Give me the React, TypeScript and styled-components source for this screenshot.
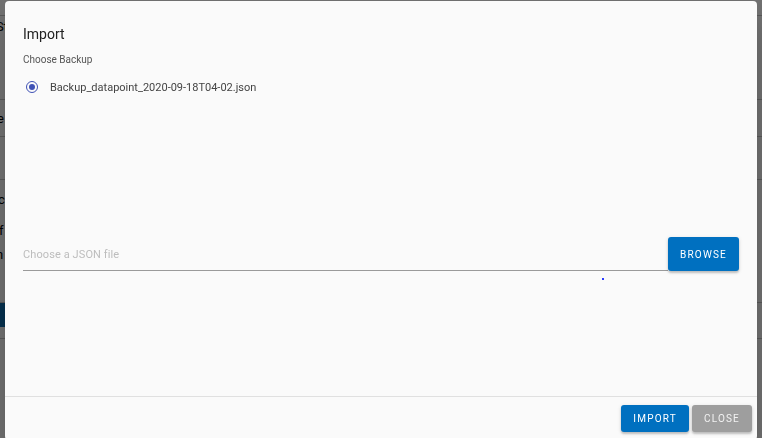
import React from "react";
import styled, { createGlobalStyle } from "styled-components";

const Global = createGlobalStyle`
  html, body { margin: 0; padding: 0; }
  body {
    width: 762px;
    height: 438px;
    overflow: hidden;
    background: #ffffff;
    font-family: Roboto, "Liberation Sans", Arial, sans-serif;
  }
`;

/* ---------- background page (behind the modal) ---------- */
const Page = styled.div`
  width: 762px;
  height: 438px;
  display: flex;
  flex-direction: column;
  background: #fff;
  font-size: 13px;
  color: #000;
`;

const PageRow = styled.div<{ $h: number; $line?: boolean }>`
  height: ${(p) => p.$h}px;
  display: flex;
  align-items: center;
  border-bottom: ${(p) => (p.$line ? "1px solid #c8c8c8" : "none")};
  box-sizing: border-box;
  white-space: nowrap;
`;

const PageText = styled.span<{ $shift: number }>`
  margin-left: ${(p) => p.$shift}px;
`;

const PageButton = styled.div`
  width: 120px;
  height: 24px;
  background: #0a6db0;
`;

/* ---------- modal ---------- */
const Backdrop = styled.div`
  position: fixed;
  inset: 0;
  background: rgba(0, 0, 0, 0.56);
  display: flex;
  align-items: flex-start;
  justify-content: center;
`;

const Dialog = styled.div`
  margin-top: 1px;
  width: 752px;
  height: 439px;
  background: #fafafa;
  border-radius: 4px;
  box-shadow: 0 11px 15px -7px rgba(0, 0, 0, 0.2),
    0 24px 38px 3px rgba(0, 0, 0, 0.14);
  display: flex;
  flex-direction: column;
  box-sizing: border-box;
`;

const Content = styled.div`
  position: relative;
  flex: 1;
  padding: 25px 18px 0 18px;
  display: flex;
  flex-direction: column;
`;

const Title = styled.h2`
  margin: 0;
  font-size: 14px;
  line-height: 16px;
  font-weight: 400;
  color: #222;
`;

const SectionLabel = styled.div`
  margin-top: 12px;
  font-size: 10px;
  line-height: 12px;
  color: #555;
`;

const RadioRow = styled.label`
  margin-top: 11px;
  height: 20px;
  display: flex;
  align-items: center;
  gap: 12px;
  padding-left: 3px;
  font-size: 11px;
  color: #444;
`;

const RadioOuter = styled.span`
  width: 12px;
  height: 12px;
  box-sizing: border-box;
  border: 1.5px solid #3f51b5;
  border-radius: 50%;
  display: flex;
  align-items: center;
  justify-content: center;
`;

const RadioInner = styled.span`
  width: 6px;
  height: 6px;
  border-radius: 50%;
  background: #3f51b5;
`;

const FileRow = styled.div`
  margin-top: 140px;
  display: flex;
  align-items: flex-end;
`;

const FileField = styled.div`
  flex: 1;
  height: 34px;
  box-sizing: border-box;
  border-bottom: 1px solid #9a9a9a;
  display: flex;
  align-items: center;
  padding-top: 1px;
  font-size: 11px;
  color: #bdbdbd;
  letter-spacing: 0.1px;
`;

const Button = styled.button<{ $variant: "primary" | "muted"; $h: number }>`
  height: ${(p) => p.$h}px;
  padding: 0 12px;
  border: none;
  border-radius: 3px;
  font-family: Roboto, "Liberation Sans", Arial, sans-serif;
  font-size: 10px;
  font-weight: 400;
  letter-spacing: 1.2px;
  text-transform: uppercase;
  color: ${(p) => (p.$variant === "primary" ? "#fff" : "#f2f2f2")};
  background: ${(p) => (p.$variant === "primary" ? "#0070c0" : "#9e9e9e")};
  box-shadow: 0 2px 2px rgba(0, 0, 0, 0.18), 0 1px 4px rgba(0, 0, 0, 0.12);
  cursor: pointer;
`;

const ProgressDot = styled.span`
  position: absolute;
  left: 597px;
  top: 277px;
  width: 2px;
  height: 2px;
  background: #2b3cff;
`;

const Footer = styled.div`
  border-top: 1px solid #e0e0e0;
  padding: 8px 5px 8px;
  display: flex;
  justify-content: flex-end;
  gap: 3px;
`;

export default function App() {
  return (
    <>
      <Global />
      <Page>
        <PageRow $h={16} $line />
        <PageRow $h={20}>
          <PageText $shift={-4}>St</PageText>
        </PageRow>
        <PageRow $h={64} $line />
        <PageRow $h={37} $line>
          <PageText $shift={-3}>e</PageText>
        </PageRow>
        <PageRow $h={43} $line />
        <PageRow $h={38}>
          <PageText $shift={-2}>ca</PageText>
        </PageRow>
        <PageRow $h={24}>
          <PageText $shift={-1}>f</PageText>
        </PageRow>
        <PageRow $h={24}>
          <PageText $shift={-4}>n</PageText>
        </PageRow>
        <PageRow $h={37} $line />
        <PageRow $h={24}>
          <PageButton />
        </PageRow>
        <PageRow $h={12} $line />
        <PageRow $h={80} />
      </Page>
      <Backdrop>
        <Dialog role="dialog">
          <Content>
            <Title>Import</Title>
            <SectionLabel>Choose Backup</SectionLabel>
            <RadioRow>
              <RadioOuter>
                <RadioInner />
              </RadioOuter>
              Backup_datapoint_2020-09-18T04-02.json
            </RadioRow>
            <FileRow>
              <FileField>Choose a JSON file</FileField>
              <Button $variant="primary" $h={34}>
                Browse
              </Button>
            </FileRow>
            <ProgressDot />
          </Content>
          <Footer>
            <Button $variant="primary" $h={27}>
              Import
            </Button>
            <Button $variant="muted" $h={27}>
              Close
            </Button>
          </Footer>
        </Dialog>
      </Backdrop>
    </>
  );
}
